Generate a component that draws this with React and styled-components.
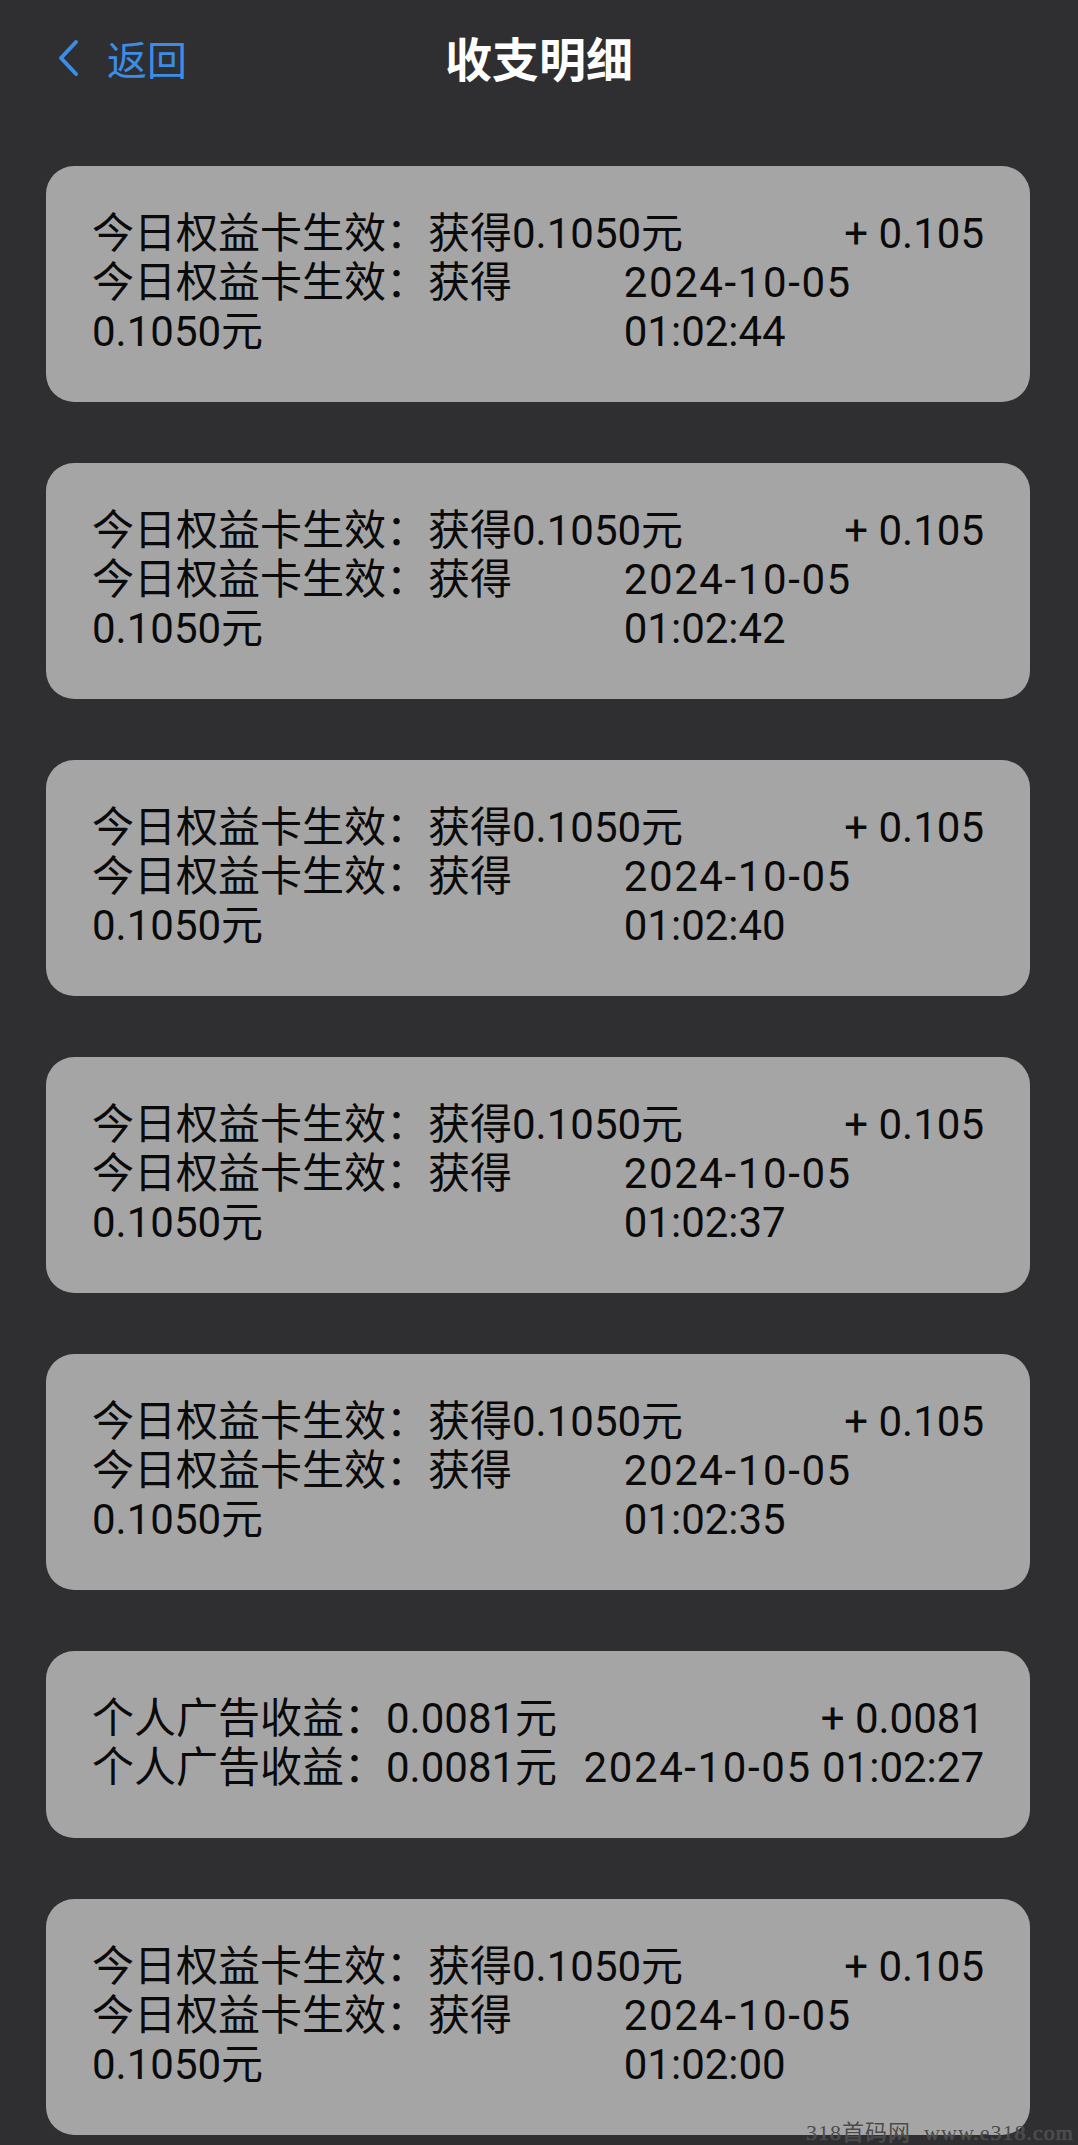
import styled, { createGlobalStyle } from "styled-components";

const records = [
  { kind: "card", amount: "0.105", date: "2024-10-05", clock: "01:02:44" },
  { kind: "card", amount: "0.105", date: "2024-10-05", clock: "01:02:42" },
  { kind: "card", amount: "0.105", date: "2024-10-05", clock: "01:02:40" },
  { kind: "card", amount: "0.105", date: "2024-10-05", clock: "01:02:37" },
  { kind: "card", amount: "0.105", date: "2024-10-05", clock: "01:02:35" },
  { kind: "ad", amount: "0.0081", date: "2024-10-05", clock: "01:02:27" },
  { kind: "card", amount: "0.105", date: "2024-10-05", clock: "01:02:00" },
];

const titles = {
  card: "今日权益卡生效：获得0.1050元",
  ad: "个人广告收益：0.0081元",
};

export default function App() {
  return (
    <Page>
      <GlobalStyle />
      <Header>
        <BackButton>
          <svg width="24" height="40" viewBox="0 0 24 40" fill="none">
            <path
              d="M20 4 L5 20 L20 36"
              stroke="#3b8de6"
              strokeWidth="4"
              strokeLinecap="round"
              strokeLinejoin="round"
            />
          </svg>
          <BackLabel>返回</BackLabel>
        </BackButton>
        <Title>收支明细</Title>
      </Header>

      <List>
        {records.map((r, i) => (
          <RecordCard key={i}>
            <Row>
              <Text>{titles[r.kind]}</Text>
              <Amount>+ {r.amount}</Amount>
            </Row>
            <Row>
              <Text>{titles[r.kind]}</Text>
              <Time>
                <DatePart>{r.date}</DatePart> <span>{r.clock}</span>
              </Time>
            </Row>
          </RecordCard>
        ))}
      </List>

      <Watermark>318首码网&nbsp;&nbsp;www.e318.com</Watermark>
    </Page>
  );
}

const GlobalStyle = createGlobalStyle`
  html, body {
    margin: 0;
    padding: 0;
    background: #2f2f31;
  }

  * {
    box-sizing: border-box;
  }
`;

const Page = styled.div`
  position: relative;
  min-height: 2145px;
  overflow: hidden;
  background: #2f2f31;
  font-family: Roboto, "Noto Sans CJK SC", sans-serif;
`;

const Header = styled.header`
  position: relative;
  height: 120px;
  padding-bottom: 8px;
  display: flex;
  align-items: center;
  justify-content: center;
`;

const BackButton = styled.div`
  position: absolute;
  left: 56px;
  top: 38px;
  display: flex;
  align-items: center;
  gap: 27px;
  color: #3b8de6;
`;

const BackLabel = styled.span`
  font-family: "Noto Sans CJK SC", sans-serif;
  font-size: 40px;
  line-height: 40px;
`;

const Title = styled.h1`
  margin: 0;
  font-family: "Noto Sans CJK SC", sans-serif;
  font-size: 47px;
  font-weight: 700;
  color: #ffffff;
  line-height: 1;
`;

const List = styled.div`
  display: flex;
  flex-direction: column;
  gap: 61px;
  padding: 46px 48px 0 46px;
`;

const RecordCard = styled.div`
  background: #a5a5a5;
  border-radius: 28px;
  padding: 43px 46px 46px;
  color: #0a0a0a;
  font-size: 42px;
  line-height: 49px;
`;

const Row = styled.div`
  display: flex;
  justify-content: space-between;
  align-items: flex-start;
`;

const Text = styled.span`
  min-width: 0;
`;

const Amount = styled.span`
  flex-shrink: 0;
  white-space: nowrap;
`;

const Time = styled.span`
  min-width: 0;
`;

const DatePart = styled.span`
  white-space: nowrap;
  letter-spacing: 1.6px;
`;

const Watermark = styled.div`
  position: absolute;
  right: 4px;
  bottom: 0;
  font-family: "Liberation Serif", "Noto Sans CJK SC", serif;
  font-size: 22px;
  line-height: 24px;
  color: #4a4a4a;
  letter-spacing: 1px;
  text-shadow: 0 0 1px rgba(255, 255, 255, 0.25);
`;
